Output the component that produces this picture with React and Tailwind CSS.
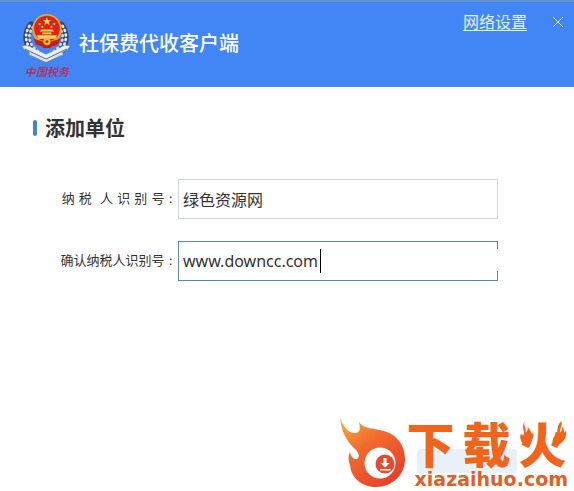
import React, { useState } from "react";

const Emblem = () => (
  <svg viewBox="0 0 52 74" className="h-[68px] w-12" aria-hidden="true">
    {/* Wheat wreath */}
    <g fill="none" strokeLinecap="round">
      <path d="M10 12C3 21 3 36 16 43M42 12c7 9 7 24-6 31" stroke="#34496a" strokeWidth="8" />
      <path d="M8 13C2 22 3 35 14 42M44 13c6 9 5 22-6 29" stroke="#e4e9e6" strokeWidth="3" strokeDasharray="1 4" />
      <path d="M12 14C5 23 7 34 18 41M40 14c7 9 5 20-6 27" stroke="#cfd8dc" strokeWidth="3" strokeDasharray="1 4" />
    </g>
    {/* Open book */}
    <path d="M1 35l23 11v3L4 40zM51 35L28 46v3l20-9z" fill="#42506b" />
    <path d="M0 35l5-1 21 10 21-10 5 1-3 4-23 11L3 39z" fill="#e9eff0" />
    <path d="M8 41l18 8 18-8v4l-18 8-18-8z" fill="#dce5ea" />
    <path d="M9 45l17 8 17-8" fill="none" stroke="#61799a" />
    <path d="M3 38l23 11 23-11" fill="none" stroke="#53627a" />
    {/* National emblem */}
    <ellipse cx="27" cy="17" rx="16" ry="17" fill="#e7a43a" />
    <ellipse cx="27" cy="16" rx="14" ry="14" fill="#dc2415" />
    <path d="M27 3.500l1.200 3.200h3.400l-2.700 2 1 3.200-2.900-1.900-2.900 1.900 1-3.200-2.700-2h3.400z" fill="#ffe36b" />
    <g fill="#ffd65a">
      <circle cx="19" cy="11" r="1.200" />
      <circle cx="22" cy="14" r="1.200" />
      <circle cx="32" cy="14" r="1.200" />
      <circle cx="35" cy="11" r="1.200" />
      <path d="M21 17h12l2 2H19zM22 20h10v2H22zM16 23h22l-2 4H18z" />
    </g>
    <path d="M12 26c5 3 8 2 10 4h10c2-2 5-1 10-4l-3 7c-4 3-7 1-8 4h-8c-1-3-4-1-8-4z" fill="#c81e12" />
    <circle cx="27" cy="30" r="4" fill="#f0b947" />
    <circle cx="27" cy="30" r="1.500" fill="#c81e12" />
    <text
      x="27"
      y="68"
      textAnchor="middle"
      fontSize="12"
      fontStyle="italic"
      fontWeight="500"
      fill="#b52b55"
      fontFamily="'Noto Sans CJK SC', sans-serif"
    >
      中国税务
    </text>
  </svg>
);

const FlameLogo = () => (
  <svg viewBox="0 0 68 72" className="h-[72px] w-[68px]" aria-hidden="true">
    <defs>
      <linearGradient id="flame" x1="0" y1="0" x2="0.700" y2="1">
        <stop offset="0" stopColor="#fbb040" />
        <stop offset="0.450" stopColor="#f26a2e" />
        <stop offset="1" stopColor="#e8402a" />
      </linearGradient>
    </defs>
    <path
      d="M1 0C4 10 10 17 17 16C22 15 21 10 20 5C24 11 31 11 40 13C56 15 66 27 66 42C66 58 53 70 37 70C22 70 12 60 11 48C9 44 9 39 11 35C12 40 15 43 18 42C21 40 20 37 17 33C6 23 2 13 1 0Z"
      fill="url(#flame)"
    />
    <circle cx="41" cy="46" r="15.500" fill="#fff" />
    <circle cx="46" cy="47" r="9.500" fill="#e84a2c" />
    <path d="M44.500 41h3v5h3L46 50.500 41.500 46h3zM41 52h10.500v1.500H41z" fill="#fff" />
  </svg>
);

// Small flames on both sides of the last character
const Sparks = () => (
  <svg viewBox="0 0 50 26" className="absolute inset-x-0 top-0 w-full" fill="#f2641c" aria-hidden="true">
    <path d="M6 0C4 5 8 7 7 12C9 11 9 8 9 6C13 11 15 16 12 20C9 25 3 25 2 20C1 18 1 15 2 13C3 15 4 15 5 14C6 10 2 6 6 0Z" />
    <path d="M44 0C46 5 42 7 43 12C45 10 45 8 45 6C47 8 47 10 47 12C48 12 48 11 49 10C50 17 46 23 40 25C35 26 34 21 36 17C37 18 38 18 39 17C41 12 38 6 44 0Z" />
  </svg>
);

const App = () => {
  const [taxId, setTaxId] = useState("绿色资源网");
  const [confirmId, setConfirmId] = useState("www.downcc.com");

  return (
    <div className="flex min-h-screen flex-col bg-white font-['Noto_Sans','Noto_Sans_CJK_SC',sans-serif] text-[#333]">
      {/* Title bar */}
      <header className="flex items-start border-t-2 border-[#6292d6] bg-[#4285f4] pb-[5px] pl-[22px] pr-2">
        <div className="flex flex-1 items-center gap-[9px] pt-3">
          <Emblem />
          <h1 className="pb-2 text-[20px] leading-7 font-medium text-white">社保费代收客户端</h1>
        </div>
        <a href="#network" className="mt-2 text-base leading-6 text-[#e3f2ff] underline underline-offset-2">
          网络设置
        </a>
        <button type="button" aria-label="关闭" className="mt-3 ml-[23px] flex size-4 items-center justify-center">
          <svg viewBox="0 0 10 10" className="size-2.5" stroke="#d3e6fa">
            <path d="M0 0l10 10M10 0L0 10" />
          </svg>
        </button>
      </header>

      <main className="flex-1 px-[33px] pt-7">
        <div className="flex items-center gap-2">
          <span className="mb-0.5 h-4 w-1 rounded-full bg-[#4285d0]" />
          <h2 className="text-[20px] leading-7 font-bold">添加单位</h2>
        </div>

        <form className="mt-9 flex flex-col gap-[22px]">
          <div className="flex items-center">
            <label
              htmlFor="taxId"
              className="w-[145px] pr-[5px] text-right font-['DejaVu_Sans','Noto_Sans_CJK_SC',sans-serif] text-[13px] whitespace-pre"
            >
              纳 税  人 识 别 号 :
            </label>
            <input
              id="taxId"
              value={taxId}
              onChange={(e) => setTaxId(e.target.value)}
              className="h-10 w-80 border border-[#d3d6d8] px-1 text-base outline-none"
            />
          </div>
          <div className="flex items-center">
            <label
              htmlFor="confirmId"
              className="w-[145px] pr-[5px] text-right font-['DejaVu_Sans','Noto_Sans_CJK_SC',sans-serif] text-[13px] whitespace-pre"
            >
              确认纳税人识别号 :
            </label>
            <div className="relative">
              <input
                id="confirmId"
                value={confirmId}
                onChange={(e) => setConfirmId(e.target.value)}
                className="h-10 w-80 border border-[#5688b4] px-1 text-base outline-none"
              />
              <span className="absolute top-2 left-[142px] h-6 w-px bg-black" />
              <span className="absolute top-2 right-0 h-[22px] w-1 bg-white" />
            </div>
          </div>
        </form>
      </main>

      <footer className="flex items-end justify-end pr-1.5 pb-0.5">
        <FlameLogo />
        <div className="relative">
          <button type="button" aria-label="下一步" className="absolute top-7 left-2.5 h-6 w-25 rounded-sm bg-[#e8f0f8]" />
          <p className="relative flex gap-2 text-[48px] leading-12 font-black text-[#f2641c]">
            <span>下</span>
            <span>载</span>
            <span className="relative">
              火
              <Sparks />
            </span>
          </p>
          <p className="relative pl-2 font-['DejaVu_Sans',sans-serif] text-[19px] leading-5 font-bold text-[#e0602a]">
            xiazaihuo.com
          </p>
        </div>
      </footer>
    </div>
  );
};

export default App;
